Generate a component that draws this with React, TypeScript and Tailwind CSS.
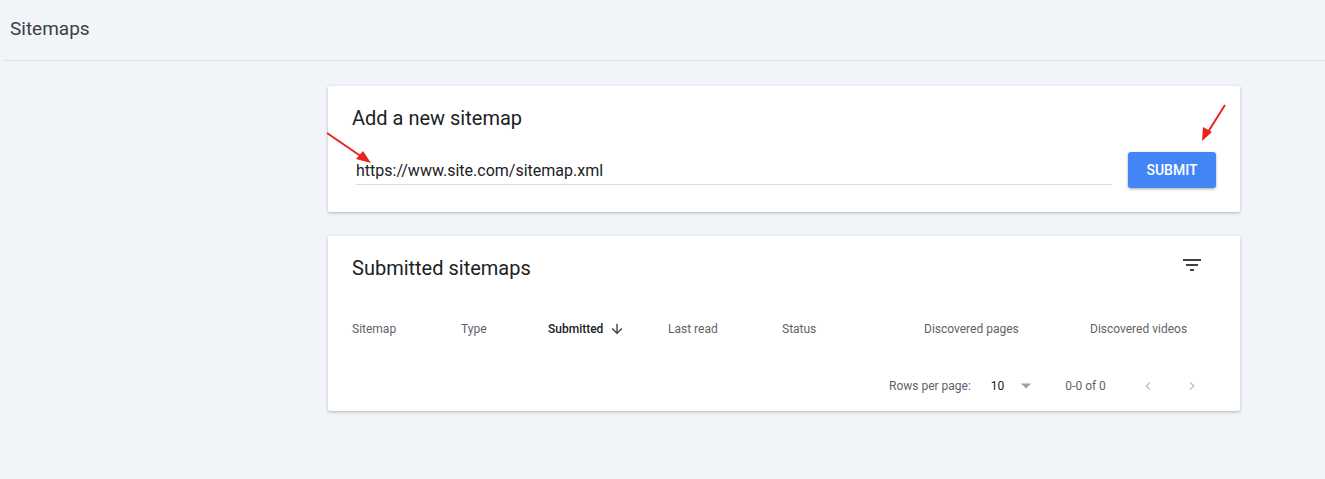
export default function App() {
  return (
    <div className="relative w-[1325px] h-[479px] bg-[#f1f4f9] overflow-hidden" style={{ fontFamily: "Roboto, 'Liberation Sans', sans-serif" }}>
      <div className="h-[61px] flex items-center pl-[10px] ml-[5px] border-b border-[#dadce0]">
        <span className="text-[19px] text-[#3c4043] -ml-[5px] -mt-[2px]">Sitemaps</span>
      </div>
      <div className="ml-[328px] w-[912px] mt-[25px] flex flex-col gap-[24px]">
        <div className="bg-white rounded-[2px] shadow-[0_1px_3px_rgba(60,64,67,0.35)] h-[126px] pl-[24px] pr-[24px] pt-[20px]">
          <div className="text-[20px] text-[#202124] leading-[24px]">Add a new sitemap</div>
          <div className="flex items-end mt-[22px]">
            <div className="w-[756px] ml-[4px] border-b border-[#dadce0] pb-[3px] text-[16px] text-[#202124] leading-[20px]">https://www.site.com/sitemap.xml</div>
            <button className="ml-[16px] -mb-[3px] w-[88px] h-[36px] bg-[#4285f4] rounded-[3px] text-white text-[14px] font-medium shadow-[0_1px_3px_rgba(0,0,0,0.35)]">SUBMIT</button>
          </div>
        </div>
        <div className="bg-white rounded-[2px] shadow-[0_1px_3px_rgba(60,64,67,0.35)] h-[175px] px-[24px] pt-[20px]">
          <div className="flex items-center justify-between">
            <div className="text-[20px] text-[#202124] leading-[24px]">Submitted sitemaps</div>
            <svg width="24" height="24" viewBox="0 0 24 24" className="mr-[12px] -mt-[6px]"><path d="M10 18h4v-2h-4v2zM3 6v2h18V6H3zm3 7h12v-2H6v2z" fill="#3c4043" /></svg>
          </div>
          <div className="relative h-[20px] mt-[39px] text-[12px] text-[#5f6368] leading-[20px]">
            <span className="absolute left-0">Sitemap</span>
            <span className="absolute left-[109px]">Type</span>
            <span className="absolute left-[196px] text-[#202124] font-medium flex items-center gap-[6px]">Submitted
              <svg width="16" height="16" viewBox="0 0 24 24"><path d="M20 12l-1.41-1.41L13 16.17V4h-2v12.17l-5.58-5.59L4 12l8 8 8-8z" fill="#3c4043" /></svg>
            </span>
            <span className="absolute left-[316px]">Last read</span>
            <span className="absolute left-[430px]">Status</span>
            <span className="absolute left-[572px]">Discovered pages</span>
            <span className="absolute left-[738px]">Discovered videos</span>
          </div>
          <div className="flex items-center mt-[37px] text-[12px] text-[#5f6368] h-[20px]">
            <span className="ml-[537px]">Rows per page:</span>
            <span className="ml-[20px] text-[#202124]">10</span>
            <svg width="10" height="6" viewBox="0 0 10 5" className="ml-[17px]"><path d="M0 0l5 5 5-5z" fill="#9aa0a6" /></svg>
            <span className="ml-[34px]">0-0 of 0</span>
            <svg width="16" height="16" viewBox="0 0 24 24" className="ml-[34px]"><path d="M15.41 7.41L14 6l-6 6 6 6 1.41-1.41L10.83 12z" fill="#bdc1c6" /></svg>
            <svg width="16" height="16" viewBox="0 0 24 24" className="ml-[28px]"><path d="M10 6L8.59 7.41 13.17 12l-4.58 4.59L10 18l6-6z" fill="#bdc1c6" /></svg>
          </div>
        </div>
      </div>
      <svg className="absolute left-0 top-0" width="1325" height="479">
        <line x1="327" y1="133" x2="362" y2="157" stroke="#e8231c" strokeWidth="2" />
        <polygon points="371,163 356,159 363,151" fill="#e8231c" />
        <line x1="1225" y1="105" x2="1208" y2="132" stroke="#e8231c" strokeWidth="2" />
        <polygon points="1202,141 1203,127 1212,132" fill="#e8231c" />
      </svg>
    </div>
  );
}
